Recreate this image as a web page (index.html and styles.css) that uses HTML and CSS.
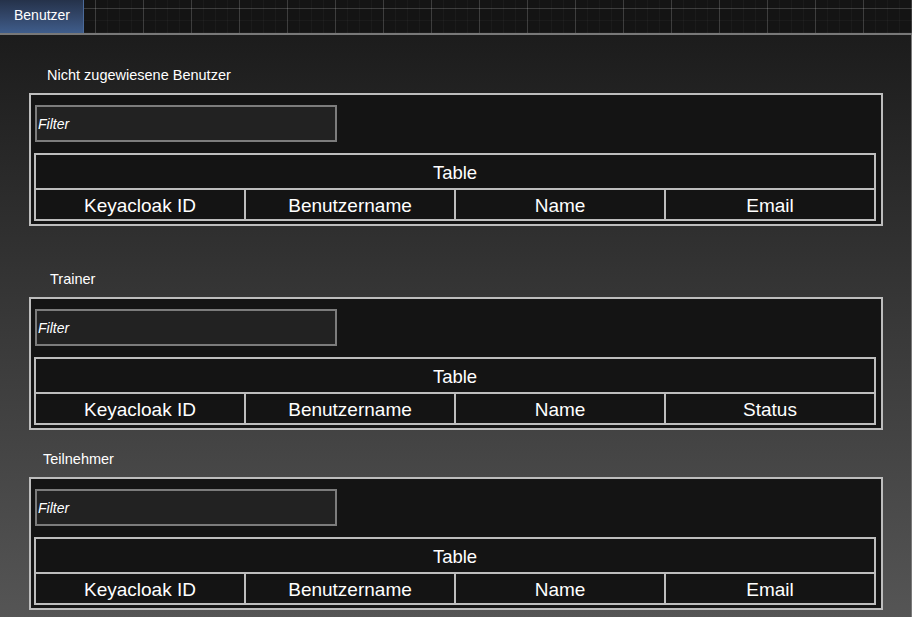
FILE: index.html
```html
<!DOCTYPE html>
<html lang="de">
<head>
<meta charset="utf-8">
<title>Benutzer</title>
<link rel="stylesheet" href="styles.css">
</head>
<body>
<div class="app">
  <header class="topbar">
    <div class="tab">Benutzer</div>
  </header>
  <main class="panel">
    <section class="section section--first">
      <div class="label label--a">Nicht zugewiesene Benutzer</div>
      <div class="box">
        <input class="filter" type="text" placeholder="Filter">
        <table class="grid">
          <tr><th class="caption" colspan="4">Table</th></tr>
          <tr><th>Keyacloak ID</th><th>Benutzername</th><th>Name</th><th>Email</th></tr>
        </table>
      </div>
    </section>
    <section class="section section--second">
      <div class="label label--b">Trainer</div>
      <div class="box">
        <input class="filter" type="text" placeholder="Filter">
        <table class="grid">
          <tr><th class="caption" colspan="4">Table</th></tr>
          <tr><th>Keyacloak ID</th><th>Benutzername</th><th>Name</th><th>Status</th></tr>
        </table>
      </div>
    </section>
    <section class="section section--third">
      <div class="label label--c">Teilnehmer</div>
      <div class="box">
        <input class="filter" type="text" placeholder="Filter">
        <table class="grid">
          <tr><th class="caption" colspan="4">Table</th></tr>
          <tr><th>Keyacloak ID</th><th>Benutzername</th><th>Name</th><th>Email</th></tr>
        </table>
      </div>
    </section>
  </main>
</div>
</body>
</html>
```
FILE: styles.css
```css
* { box-sizing: border-box; }
html, body {
  margin: 0;
  padding: 0;
  width: 912px;
  height: 617px;
  overflow: hidden;
  background: #1c1c1c;
  font-family: "Liberation Sans", Arial, sans-serif;
  color: #fff;
}
.app {
  display: flex;
  flex-direction: column;
  height: 617px;
}
.topbar {
  height: 35px;
  flex: none;
  display: flex;
  border-bottom: 2px solid #787878;
  background-color: #141414;
  background-image:
    linear-gradient(90deg, rgba(255,255,255,0.15) 1px, transparent 1px),
    linear-gradient(0deg, rgba(255,255,255,0.15) 1px, transparent 1px),
    linear-gradient(90deg, rgba(255,255,255,0.03) 1px, transparent 1px),
    linear-gradient(0deg, rgba(255,255,255,0.03) 1px, transparent 1px);
  background-size: 48px 48px, 48px 48px, 12px 12px, 12px 12px;
  background-position: 47px 9px, 47px 9px, 11px 9px, 11px 9px;
}
.tab {
  width: 84px;
  height: 33px;
  padding-left: 14px;
  line-height: 31px;
  font-size: 14px;
  color: #fff;
  background: linear-gradient(180deg, #25324a 0%, #34496d 55%, #3f5d8b 100%);
  border-right: 1px solid #4b6a99;
}
.panel {
  flex: 1;
  display: flex;
  flex-direction: column;
  padding: 0 0 0 29px;
  border-right: 1px solid #7a7a7a;
  background: linear-gradient(180deg, #1c1c1c 0%, #555555 100%);
}
.section { display: flex; flex-direction: column; width: 854px; }
.section--first { margin-top: 31px; }
.section--second { margin-top: 44px; }
.section--third { margin-top: 20px; }
.label {
  font-size: 14.5px;
  line-height: 18px;
  height: 18px;
  margin-bottom: 9px;
}
.label--a { margin-left: 18px; }
.label--b { margin-left: 21px; }
.label--c { margin-left: 14px; }
.box {
  border: 2px solid #bdbdbd;
  background: #141414;
  padding: 0 5px 3px 3px;
  display: flex;
  flex-direction: column;
  align-items: flex-start;
}
.filter {
  width: 302px;
  height: 37px;
  margin: 10px 0 11px 1px;
  padding: 0 1px;
  border: 2px solid #7c7c7c;
  background: #222222;
  color: #fff;
  font-family: "Liberation Sans", Arial, sans-serif;
  font-size: 14px;
  font-style: italic;
  outline: none;
}
.filter::placeholder { color: #fff; opacity: 1; font-style: italic; }
.grid {
  width: 842px;
  border-collapse: collapse;
  table-layout: fixed;
}
.grid th {
  border: 2px solid #bdbdbd;
  font-weight: normal;
  font-size: 19px;
  line-height: 22px;
  height: 31px;
  padding: 2px 0 0;
  text-align: center;
  color: #fff;
}
.grid th.caption { height: 35px; padding-top: 3px; font-size: 18.5px; }
```
